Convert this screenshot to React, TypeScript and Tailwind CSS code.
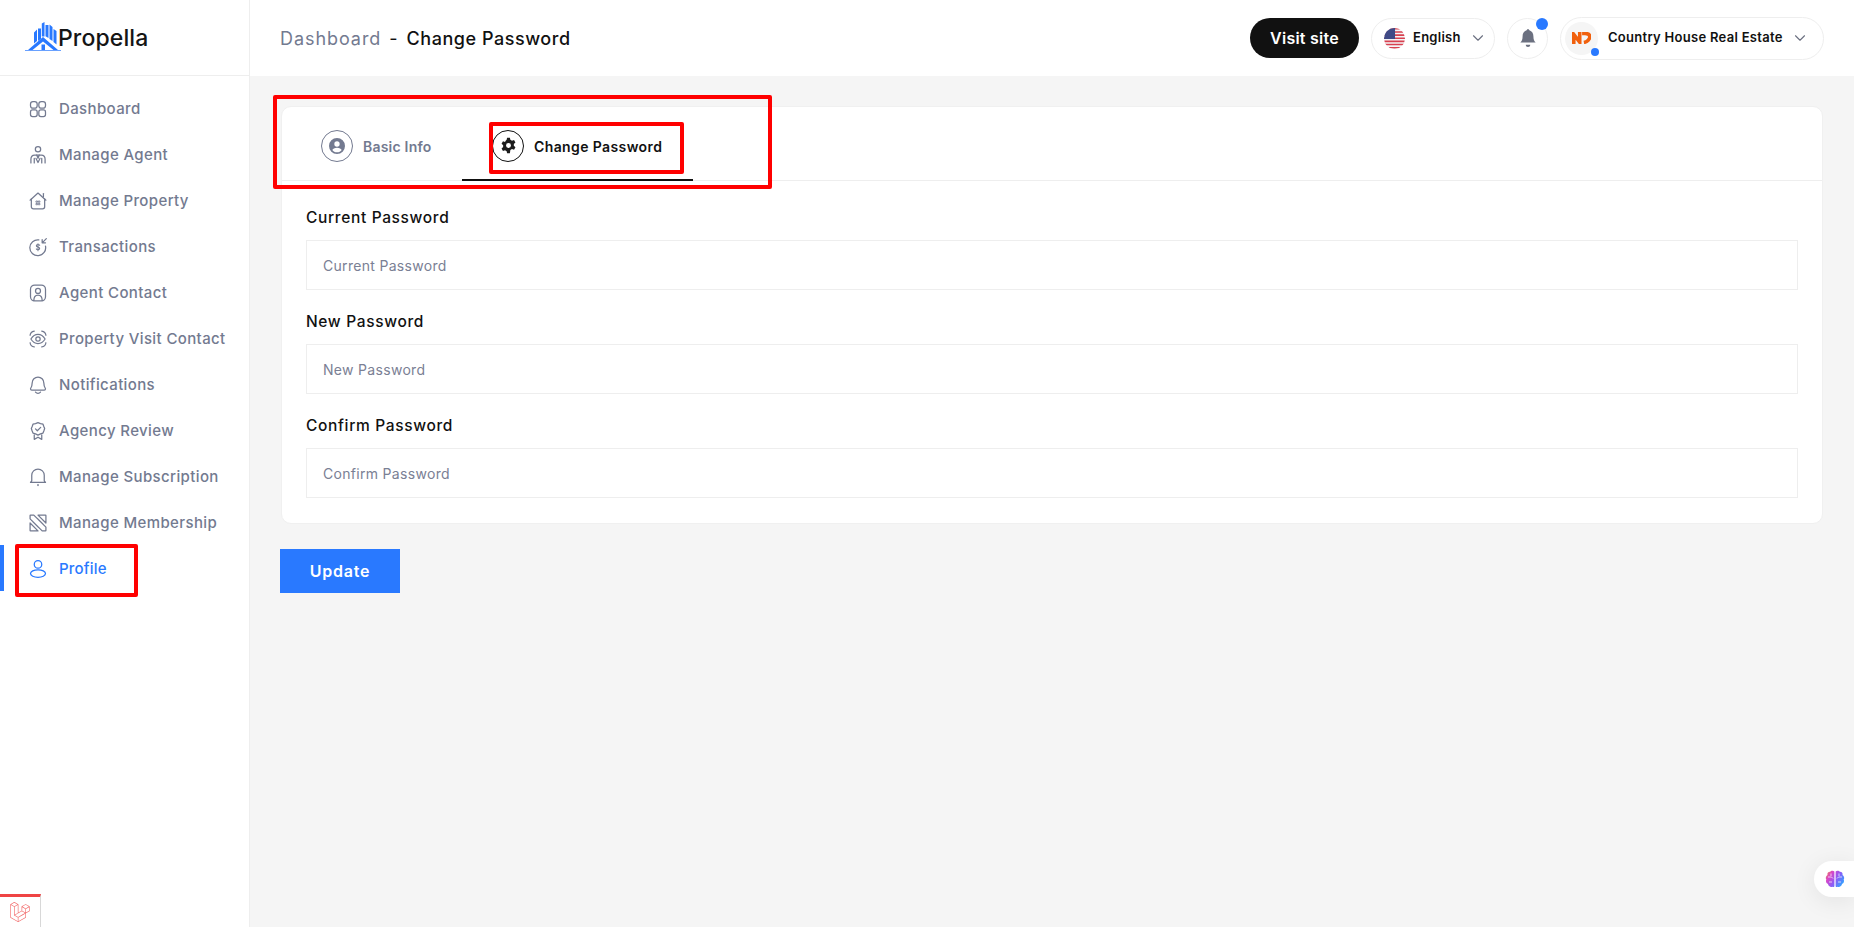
import React from "react";
import { ChevronDown } from "lucide-react";
import { SiLaravel } from "react-icons/si";

const S = ({ children }: { children: React.ReactNode }) => (
  <svg viewBox="0 0 24 24" fill="none" stroke="currentColor" strokeWidth="1.5" strokeLinecap="round" strokeLinejoin="round" className="h-[20px] w-[20px] shrink-0">
    {children}
  </svg>
);

const icons: Record<string, React.ReactNode> = {
  Dashboard: <><rect x="3" y="3" width="8" height="8" rx="3" /><rect x="13" y="3" width="8" height="8" rx="3" /><rect x="3" y="13" width="8" height="8" rx="2.5" /><rect x="13" y="13" width="8" height="8" rx="2.5" /></>,
  "Manage Agent": <><circle cx="12" cy="5" r="3.200" /><path d="M3.500 21.500V17c0-3 1.800-5 4.500-5h8c2.700 0 4.500 2 4.500 5v4.500" /><path d="M7.500 21.500V16M16.500 21.500V16" /><path d="M10.500 12 12 16l1.500-4M9.500 16l2.500 5 2.500-5" /></>,
  "Manage Property": <><path d="M2.500 11 12 2.500 21.500 11" /><path d="M4 9.500V19a2.500 2.500 0 0 0 2.500 2.500h11A2.500 2.500 0 0 0 20 19V9.500" /><path d="M18.500 3v4" /><path d="M10 12h1.500v1.500H10zM12.800 12h1.500v1.500h-1.500zM10 15h1.500v1.500H10zM12.800 15h1.500v1.500h-1.500z" strokeWidth="1" /></>,
  Transactions: <><path d="M21 11a9.500 9.500 0 1 1-8-7.500" /><path d="M22 2l-5 5M17 3v4h4" /><path d="M14 10c-.5-.8-1.200-1-2-1-1.200 0-2 .6-2 1.500 0 2.200 4 1 4 3.300 0 .9-.8 1.500-2 1.500-.9 0-1.600-.3-2-1M12 8v8.500" strokeWidth="1.300" /></>,
  "Agent Contact": <><rect x="3" y="2.500" width="18" height="19" rx="5" /><circle cx="12" cy="9.500" r="3" /><path d="M7 21c0-4 2-6.500 5-6.500s5 2.500 5 6.500" /></>,
  "Property Visit Contact": <><path d="M2.500 7.500c.3-2.500 2-4.500 5-5M16.500 2.500c3 .5 4.700 2.500 5 5M2.500 16.500c.3 2.500 2 4.500 5 5M16.500 21.500c3-.5 4.700-2.500 5-5" /><path d="M3.500 12c2.300-3.700 5.200-5.500 8.500-5.500s6.200 1.800 8.500 5.500c-2.300 3.700-5.200 5.500-8.500 5.500S5.800 15.700 3.500 12z" /><circle cx="12" cy="12" r="2.600" /></>,
  Notifications: <><path d="M12 2.500a7 7 0 0 0-7 7c0 4-1 5.500-2 7 0 1 .5 1.500 1.500 1.500h15c1 0 1.500-.5 1.500-1.500-1-1.500-2-3-2-7a7 7 0 0 0-7-7z" /><path d="M9 20.500c.8 1 1.800 1.500 3 1.500s2.200-.5 3-1.500" /></>,
  "Agency Review": <><path d="M12 2l3 1.200 3 .6 1 2.700 1 2.500-1 3-1 2.500-3 1-3 1.500-3-1.500-3-1-1-2.500-1-3 1-2.500 1-2.700 3-.6z" /><path d="M9 9.500l2.200 2.200 4-4" /><path d="M7.500 16.500V22l4.500-2.500 4.500 2.500v-5.500" /></>,
  "Manage Subscription": <><path d="M12 2.500a7.500 7.500 0 0 0-7.500 7.500v6.500L3 18.500h18l-1.500-2V10A7.500 7.500 0 0 0 12 2.500z" /><path d="M12 21.500v.5" strokeWidth="2" /></>,
  "Manage Membership": <><path d="M7 2.500H3a.5.5 0 0 0-.5.500v4L17 21.500h4a.5.5 0 0 0 .5-.5v-4L7 2.500z" /><path d="M2.500 12v9a.5.5 0 0 0 .5.500h9zM12 2.500h9a.5.5 0 0 1 .5.500v9z" /><path d="M6 11l7 7M11 6l7 7" strokeWidth="1" /></>,
  Profile: <><circle cx="12" cy="6.500" r="4.500" /><ellipse cx="12" cy="17.500" rx="9" ry="4.500" /></>,
};

const nav = ["Dashboard", "Manage Agent", "Manage Property", "Transactions", "Agent Contact", "Property Visit Contact", "Notifications", "Agency Review", "Manage Subscription", "Manage Membership", "Profile"];

const Logo = () => (
  <svg viewBox="0 0 36 30" className="h-[30px] w-[36px] shrink-0">
    <g fill="#2979ff">
      <path d="M9 10.500 12 7.500V19l-3 2.500zM13 6.500h3V17l-3 2zM16.800 1.500 19.500 0v14.500h-2.700zM20.500 3h3v13l-3-1.800zM24.500 2.500 27.500 5v14l-3-2zM28.500 7 31.500 9v13.500l-3-2.500z" />
      <path d="M3 28 18 15 33 28h-4.500L18 19.500 7.500 28z" />
      <rect x="16.500" y="22.500" width="3.500" height="5.500" />
      <rect x="0" y="28" width="36" height="0.700" />
    </g>
  </svg>
);

const Flag = () => (
  <svg viewBox="0 0 20 20" className="h-[21px] w-[21px] shrink-0">
    <defs><clipPath id="fc"><circle cx="10" cy="10" r="10" /></clipPath></defs>
    <g clipPath="url(#fc)">
      <rect width="20" height="20" fill="#f4f4f6" />
      <path d="M0 0h20v1.500H0zM0 3h20v1.500H0zM0 6h20v1.500H0zM0 9h20v1.500H0zM0 12h20v1.500H0zM0 15h20v1.500H0zM0 18h20v1.500H0z" fill="#d8404f" />
      <rect width="10.500" height="10.500" fill="#3f4a86" />
    </g>
  </svg>
);

const Field = ({ label, first }: { label: string; first?: boolean }) => (
  <div className={first ? "" : "mt-[20px]"}>
    <div className="mb-[10px] flex h-[24px] items-center text-[15.500px] font-medium tracking-[0.042em] text-[#111]">{label}</div>
    <input
      placeholder={label}
      className="block h-[50px] w-full border border-[#eeeeee] bg-white px-[16px] text-[14px] tracking-[0.022em] outline-none placeholder:text-[#7a8094]"
    />
  </div>
);

export default function App() {
  return (
    <div className="relative flex h-screen w-full overflow-hidden bg-[#f5f5f5] text-[#111] [font-family:Inter,'Noto_Sans',sans-serif]">
      <aside className="flex w-[250px] shrink-0 flex-col border-r border-[#eeeeee] bg-white">
        <div className="flex h-[76px] shrink-0 items-center border-b border-[#eeeeee] pb-[1px] pl-[25px]">
          <Logo />
          <span className="ml-[-3px] pt-[2px] text-[23px] font-medium tracking-[0.005em] text-[#151515]">Propella</span>
        </div>
        <nav className="flex flex-col pt-[9px]">
          {nav.map((n) => {
            const active = n === "Profile";
            return (
              <div key={n} className={active ? "flex h-[46px] items-center gap-[11px] border-l-4 border-[#2979ff] pl-[24px] pt-[2px] text-[15px] font-medium tracking-[0.015em] text-[#2979ff]" : "flex h-[46px] items-center gap-[11px] pl-[28px] pt-[2px] text-[15px] font-medium tracking-[0.025em] text-[#737a90]"}>
                <S>{icons[n]}</S>
                <span>{n}</span>
              </div>
            );
          })}
        </nav>
        <div className="mt-auto flex h-[33px] w-[41px] items-center justify-center border-r border-t-[3px] border-r-[#d8d8d8] border-t-[#ef4444] bg-white">
          <SiLaravel className="h-[20px] w-[20px] text-[#f26a6a]" />
        </div>
      </aside>

      <div className="flex min-w-0 flex-1 flex-col">
        <header className="flex h-[76px] shrink-0 items-center bg-white pl-[30px] pr-[30px]">
          <div className="flex items-center text-[18px]">
            <span className="tracking-[0.052em] text-[#737a90]">Dashboard</span>
            <span className="ml-[8px] mr-[9px] text-[#111]">-</span>
            <span className="font-medium tracking-[0.030em] text-[#111]">Change Password</span>
          </div>
          <div className="ml-auto flex items-center">
            <button className="h-[40px] w-[109px] rounded-full bg-[#111] text-[16px] font-semibold tracking-[0.015em] text-white">Visit site</button>
            <div className="ml-[12px] flex h-[41px] w-[124px] items-center rounded-full border border-[#eeeeee] pl-[12px]">
              <Flag />
              <span className="ml-[8px] text-[13px] font-semibold tracking-[0.020em]">English</span>
              <ChevronDown className="ml-auto mr-[7px] h-[18px] w-[18px] text-[#6b7080]" strokeWidth={1.500} />
            </div>
            <div className="relative ml-[12px] flex h-[41px] w-[41px] items-center justify-center rounded-full border border-[#eeeeee]">
              <svg viewBox="0 0 20 22" className="h-[20px] w-[18px]" fill="#6b7080">
                <path d="M10 1a2 2 0 0 0-1.500 1.500C5.500 3.500 4 6 4 9c0 4-1 5.500-2.500 7h17C17 14.500 16 13 16 9c0-3-1.500-5.500-4.500-6.500A2 2 0 0 0 10 1z" />
                <path d="M7.500 18.500h5c0 1.500-1 2.500-2.500 2.500s-2.500-1-2.500-2.500z" />
              </svg>
              <span className="absolute right-[-1px] top-[-1px] h-[12px] w-[12px] rounded-full bg-[#2979ff]" />
            </div>
            <div className="ml-[12px] flex h-[43px] w-[264px] items-center rounded-full border border-[#eeeeee] pl-[4px]">
              <div className="relative flex h-[33px] w-[33px] shrink-0 items-center justify-center rounded-full bg-[#f5f5f5]">
                <svg viewBox="0 0 16 10" className="h-[12px] w-[19px]" fill="none" stroke="#f1600d" strokeWidth="3">
                  <path d="M1.500 10V2L6.500 8.500V0M8.500 1.200H11c3 0 4 1.500 4 3s-2 4-5 4.600" />
                </svg>
                <span className="absolute bottom-[-1px] right-[-1px] h-[8px] w-[8px] rounded-full bg-[#2979ff]" />
              </div>
              <span className="ml-[10px] whitespace-nowrap text-[13px] font-semibold tracking-[0.022em]">Country House Real Estate</span>
              <ChevronDown className="ml-auto mr-[14px] h-[18px] w-[18px] text-[#6b7080]" strokeWidth={1.500} />
            </div>
          </div>
        </header>

        <main className="flex-1 pl-[30px] pr-[31px] pt-[30px]">
          <section className="ml-[1px] rounded-[10px] border border-[#f0f0f0] bg-white">
            <div className="flex h-[74px] items-end border-b border-[#eeeeee] pl-[9px]">
              <div className="flex h-[74px] w-[171px] items-center gap-[10px] pl-[30px] pt-[5px]">
                <div className="flex h-[32px] w-[32px] items-center justify-center rounded-full border border-[#737a90]">
                  <svg viewBox="0 0 24 24" className="h-[16px] w-[16px]" fill="#737a90"><path fillRule="evenodd" d="M12 0a12 12 0 1 0 0 24 12 12 0 0 0 0-24zm0 5a4 4 0 1 1 0 8 4 4 0 0 1 0-8zm0 16.500c-3 0-5.500-1.300-7-3.500.5-2 3.500-3.500 7-3.500s6.500 1.500 7 3.500c-1.500 2.200-4 3.500-7 3.500z" /></svg>
                </div>
                <span className="pt-[2px] text-[14px] font-semibold tracking-[0.015em] text-[#737a90]">Basic Info</span>
              </div>
              <div className="mb-[-1px] flex h-[74px] w-[231px] items-center gap-[10px] border-b-2 border-[#111] pl-[30px] pt-[5px]">
                <div className="flex h-[32px] w-[32px] items-center justify-center rounded-full border border-[#111]">
                  <svg viewBox="0 0 24 24" className="h-[17px] w-[17px]" fill="#1c1c1c"><path fillRule="evenodd" d="M10 1h4l.600 3a8.500 8.500 0 0 1 2.300 1.300l2.900-1 2 3.500-2.300 2a8.500 8.500 0 0 1 0 2.600l2.300 2-2 3.500-2.900-1a8.500 8.500 0 0 1-2.300 1.300L14 23h-4l-.6-3a8.500 8.500 0 0 1-2.300-1.300l-2.900 1-2-3.500 2.300-2a8.500 8.500 0 0 1 0-2.600l-2.300-2 2-3.500 2.900 1A8.500 8.500 0 0 1 9.400 4zM12 8.500a3.500 3.500 0 1 0 0 7 3.500 3.500 0 0 0 0-7z" /></svg>
                </div>
                <span className="pt-[2px] text-[14px] font-semibold tracking-[0.028em] text-[#111]">Change Password</span>
              </div>
            </div>
            <div className="px-[24px] pb-[25px] pt-[25px]">
              <Field label="Current Password" first />
              <Field label="New Password" />
              <Field label="Confirm Password" />
            </div>
          </section>
          <button className="mt-[25px] block h-[44px] w-[120px] bg-[#2979ff] text-[16px] font-semibold tracking-[0.050em] text-white">Update</button>
        </main>
      </div>

      <div className="pointer-events-none absolute left-[273px] top-[95px] h-[94px] w-[499px] rounded-[2px] border-4 border-[#ff0000]" />
      <div className="pointer-events-none absolute left-[489px] top-[122px] h-[52px] w-[195px] rounded-[2px] border-4 border-[#ff0000]" />
      <div className="pointer-events-none absolute left-[15px] top-[544px] h-[53px] w-[123px] rounded-[2px] border-4 border-[#ff0000]" />

      <div className="absolute bottom-[30px] right-0 flex h-[36px] w-[40px] items-center rounded-l-full bg-white pl-[11px] shadow-[0_4px_24px_rgba(0,0,0,0.08)]">
        <svg viewBox="0 0 20 18" className="h-[18px] w-[20px]">
          <defs><linearGradient id="bg" x1="0" y1="0" x2="1" y2="0.600"><stop offset="0" stopColor="#f08a3c" /><stop offset="0.300" stopColor="#d946c8" /><stop offset="0.650" stopColor="#8b5cf6" /><stop offset="1" stopColor="#3b9cff" /></linearGradient></defs>
          <path fill="url(#bg)" d="M9.400 1.500C8.500.300 6 .3 5 1.800 3 1.800 2 3.500 2.500 5 .8 6 .3 8.200 1.300 9.500.500 11 1.200 13.500 3 14c.3 2 2.500 3.500 4.500 2.700.7.700 1.900.5 1.900-.7zM10.600 1.500c.9-1.200 3.400-1.200 4.400.3 2 0 3 1.700 2.500 3.200 1.700 1 2.200 3.200 1.200 4.500.8 1.500.1 4-1.700 4.500-.3 2-2.500 3.500-4.500 2.700-.7.700-1.900.5-1.900-.7z" />
          <path stroke="#fff" strokeWidth="0.700" fill="none" d="M3 7h3.500l1.500 1.500M4 12h3M6 3.500V6M17 7h-3.500L12 8.500M16 12h-3M14 3.500V6" />
        </svg>
      </div>
    </div>
  );
}
